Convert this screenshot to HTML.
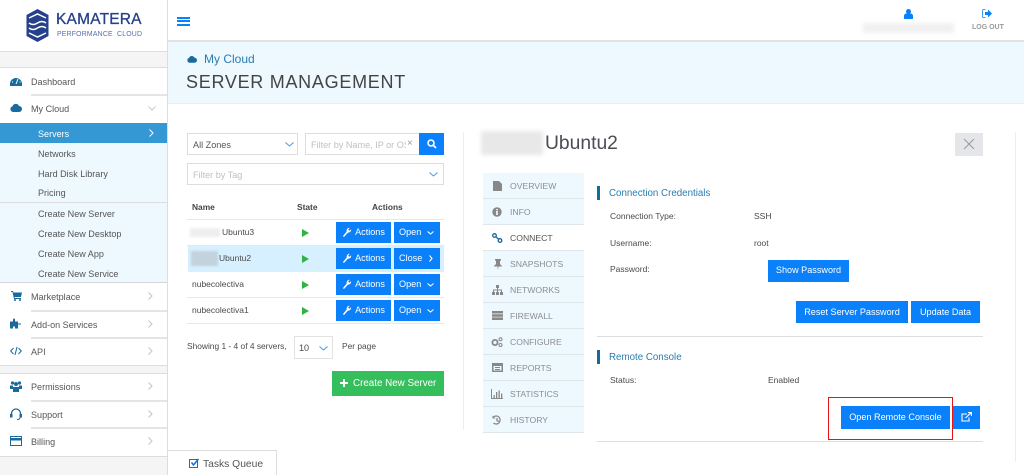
<!DOCTYPE html>
<html><head><meta charset="utf-8"><style>
*{box-sizing:border-box}
html,body{margin:0;padding:0;width:1024px;height:475px;overflow:hidden;background:#fff;font-family:"Liberation Sans",sans-serif;color:#4a4a4a}
.a{position:absolute}
.t{position:absolute;line-height:20px;height:20px;white-space:nowrap;font-size:9px}
.m{font-size:9.050px;color:#555;margin-top:1px}
.l{position:absolute;height:1px;background:#ddd}
.s{height:2px;background:#e4e4e4}
.b{position:absolute;background:#0a80fb;color:#fff;font-size:9.100px;text-align:center;white-space:nowrap}
.g{position:absolute;left:483px;width:101px;height:26px;background:#eef8ff;border-bottom:1px solid #dfe6ea}
.g span{position:absolute;left:27px;top:0;line-height:26px;font-size:8.650px;color:#8a8f93}
svg{position:absolute;overflow:visible}
.blur{position:absolute;filter:blur(2px)}
</style></head><body>

<!-- sidebar -->
<div class="a" style="left:167px;top:0;width:1px;height:475px;background:#ddd"></div>
<div class="a" style="left:0;top:51px;width:167px;height:17px;background:#f5f5f5;border-top:1px solid #ddd;border-bottom:1px solid #ddd"></div>

<!-- logo -->
<svg style="left:26px;top:9px" width="23" height="33" viewBox="0 0 23 33">
<path d="M11.500 0L22.500 6V27L11.500 33L.5 27V6Z" fill="#26408b"/>
<path d="M3 9L11.500 5L20 9M3 14q4 3 8.500 0t8.500 0M3 19q4 3 8.500 0t8.500 0M3 24L11.500 28L20 24" fill="none" stroke="#fff" stroke-width="1.500"/>
</svg>
<div class="t" style="left:56px;top:10px;font-size:15.500px;color:#26408b;letter-spacing:.2px;-webkit-text-stroke:.3px #26408b">KAMATERA</div>
<div class="t" style="left:57px;top:25px;font-size:6.900px;color:#5470a8;letter-spacing:.2px">PERFORMANCE&nbsp; CLOUD</div>

<div class="t m" style="left:31px;top:71px">Dashboard</div>
<div class="l s" style="left:31px;top:94px;width:136px"></div>
<div class="t m" style="left:31px;top:98px">My Cloud</div>

<div class="a" style="left:0;top:123px;width:167px;height:20px;background:#3498d4"></div>
<div class="a" style="left:0;top:143px;width:167px;height:139px;background:#eef8ff"></div>
<div class="t m" style="left:38px;top:123px;color:#fff">Servers</div>
<div class="t m" style="left:38px;top:143px">Networks</div>
<div class="t m" style="left:38px;top:163px">Hard Disk Library</div>
<div class="t m" style="left:38px;top:182px">Pricing</div>
<div class="l" style="left:0;top:202px;width:167px"></div>
<div class="t m" style="left:38px;top:203px">Create New Server</div>
<div class="t m" style="left:38px;top:223px">Create New Desktop</div>
<div class="t m" style="left:38px;top:243px">Create New App</div>
<div class="t m" style="left:38px;top:263px">Create New Service</div>
<div class="l" style="left:0;top:282px;width:167px;background:#d5d5d5"></div>

<div class="t m" style="left:31px;top:286px">Marketplace</div>
<div class="l s" style="left:31px;top:310px;width:136px"></div>
<div class="t m" style="left:31px;top:314px">Add-on Services</div>
<div class="l s" style="left:31px;top:337px;width:136px"></div>
<div class="t m" style="left:31px;top:341px">API</div>
<div class="a" style="left:0;top:365px;width:167px;height:9px;background:#f5f5f5;border-top:1px solid #ddd;border-bottom:1px solid #ddd"></div>
<div class="t m" style="left:31px;top:376px">Permissions</div>
<div class="l s" style="left:31px;top:400px;width:136px"></div>
<div class="t m" style="left:31px;top:404px">Support</div>
<div class="l s" style="left:31px;top:427px;width:136px"></div>
<div class="t m" style="left:31px;top:431px">Billing</div>
<div class="a" style="left:0;top:456px;width:167px;height:19px;background:#f5f5f5;border-top:1px solid #ddd"></div>

<!-- sidebar icons -->
<svg style="left:10px;top:76px" width="12" height="10" viewBox="0 0 12 10"><path d="M0 8a6 6 0 0 1 12 0v2H0Z" fill="#1a6a9c"/><path d="M6 8L8 3M2 6h1M9.500 6h1" stroke="#fff" stroke-width="1"/></svg>
<svg style="left:10px;top:103px" width="12" height="9" viewBox="0 0 12 9"><path d="M3 9a3 3 0 0 1-.5-5.800A3.500 3.500 0 0 1 9 3a3 3 0 0 1 0 6Z" fill="#1a6a9c"/></svg>
<svg style="left:11px;top:291px" width="11" height="10" viewBox="0 0 11 10"><path d="M0 0h2l.5 1.500H11L10 6H3.500L3.800 7H10V8H3L1.500 1H0Z" fill="#1a6a9c"/><circle cx="4" cy="9" r="1" fill="#1a6a9c"/><circle cx="9" cy="9" r="1" fill="#1a6a9c"/></svg>
<svg style="left:10px;top:318px" width="11" height="11" viewBox="0 0 11 10"><path d="M0 3H3V1a1 1 0 0 1 2 0V3H8V5H11V6H8V10H5V8H3V10H0Z" fill="#1a6a9c"/></svg>
<svg style="left:10px;top:347px" width="12" height="8" viewBox="0 0 12 8"><path d="M3.500 1L.7 4L3.500 7M8.500 1L11.300 4L8.500 7M7 0L5 8" fill="none" stroke="#1a6a9c" stroke-width="1"/></svg>
<svg style="left:10px;top:381px" width="12" height="11" viewBox="0 0 12 11"><circle cx="2.500" cy="2" r="1.600" fill="#1a6a9c"/><circle cx="9.500" cy="2" r="1.600" fill="#1a6a9c"/><circle cx="6" cy="3" r="2" fill="#1a6a9c"/><path d="M0 4.500H3L3 8H0ZM9 4.500H12V8H9ZM3 6H9V11H3Z" fill="#1a6a9c"/></svg>
<svg style="left:10px;top:409px" width="12" height="11" viewBox="0 0 12 11"><path d="M1.500 6V4.500a4.500 4.500 0 0 1 9 0V6" fill="none" stroke="#1a6a9c" stroke-width="1.300"/><rect x="0" y="5" width="2.500" height="3.500" fill="#1a6a9c"/><rect x="9.500" y="5" width="2.500" height="3.500" fill="#1a6a9c"/><path d="M10 8.500q0 2-3 2" fill="none" stroke="#1a6a9c"/></svg>
<svg style="left:10px;top:436px" width="12" height="10" viewBox="0 0 12 10"><rect x=".5" y=".5" width="11" height="9" fill="none" stroke="#1a6a9c"/><rect x="0" y="2" width="12" height="2.500" fill="#1a6a9c"/></svg>

<!-- sidebar chevrons -->
<svg style="left:148px;top:106px" width="8" height="5"><path d="M.5.500L4 4L7.500.500" fill="none" stroke="#ccc"/></svg>
<svg style="left:149px;top:129px" width="5" height="8"><path d="M.5.500L4 4L.5 7.500" fill="none" stroke="#fff"/></svg>
<svg style="left:148px;top:292px" width="5" height="8"><path d="M.5.500L4 4L.5 7.500" fill="none" stroke="#c4c4c4"/></svg>
<svg style="left:148px;top:320px" width="5" height="8"><path d="M.5.500L4 4L.5 7.500" fill="none" stroke="#c4c4c4"/></svg>
<svg style="left:148px;top:347px" width="5" height="8"><path d="M.5.500L4 4L.5 7.500" fill="none" stroke="#c4c4c4"/></svg>
<svg style="left:148px;top:382px" width="5" height="8"><path d="M.5.500L4 4L.5 7.500" fill="none" stroke="#c4c4c4"/></svg>
<svg style="left:148px;top:410px" width="5" height="8"><path d="M.5.500L4 4L.5 7.500" fill="none" stroke="#c4c4c4"/></svg>
<svg style="left:148px;top:437px" width="5" height="8"><path d="M.5.500L4 4L.5 7.500" fill="none" stroke="#c4c4c4"/></svg>

<!-- top bar -->
<div class="a" style="left:177px;top:17px;width:13px;height:2px;background:#0a80fb"></div>
<div class="a" style="left:177px;top:20px;width:13px;height:2px;background:#0a80fb"></div>
<div class="a" style="left:177px;top:24px;width:13px;height:2px;background:#0a80fb"></div>
<svg style="left:904px;top:9px" width="9" height="10" viewBox="0 0 9 10"><circle cx="4.500" cy="2.500" r="2.500" fill="#0a80fb"/><path d="M0 10V7q0-2 2-2.500h5q2 .5 2 2.500v3Z" fill="#0a80fb"/></svg>
<div class="blur" style="left:863px;top:23px;width:91px;height:10px;background:#f0f0f0"></div>
<svg style="left:982px;top:9px" width="10" height="9" viewBox="0 0 10 9"><path d="M3.500.500H1.500A1 1 0 0 0 .5 1.500V7.500A1 1 0 0 0 1.500 8.500H3.500" fill="none" stroke="#3d9af5"/><path d="M3 3H6V.5L10 4.500L6 8.500V6H3Z" fill="#0a80fb"/></svg>
<div class="t" style="left:972px;top:18px;font-size:7px;font-weight:700;color:#999">LOG OUT</div>
<div class="a" style="left:168px;top:40px;width:856px;height:2px;background:#e2e2e2"></div>

<!-- band -->
<div class="a" style="left:168px;top:42px;width:856px;height:62px;background:#eef8ff;border-bottom:1px solid #e6eff5"></div>
<svg style="left:187px;top:55px" width="10" height="8" viewBox="0 0 12 9"><path d="M3 9a3 3 0 0 1-.5-5.800A3.500 3.500 0 0 1 9 3a3 3 0 0 1 0 6Z" fill="#1a6a9c"/></svg>
<div class="t" style="left:204px;top:49px;font-size:12px;color:#2a7cb0">My Cloud</div>
<div class="t" style="left:186px;top:72px;font-size:18px;color:#444;letter-spacing:.72px">SERVER MANAGEMENT</div>

<!-- filters -->
<div class="a" style="left:187px;top:133px;width:111px;height:22px;border:1px solid #ddd"></div>
<div class="t" style="left:193px;top:135px;font-size:9.100px;color:#555">All Zones</div>
<svg style="left:285px;top:142px" width="9" height="5"><path d="M.5.500L4.500 4L8.500.500" fill="none" stroke="#3d9af5"/></svg>
<div class="a" style="left:305px;top:133px;width:114px;height:22px;border:1px solid #ddd;border-right:0"></div>
<div class="t" style="left:311px;top:135px;font-size:9.100px;color:#c0c0c0;width:99px;overflow:hidden">Filter by Name, IP or OS</div>
<div class="t" style="left:406px;top:134px;font-size:10px;color:#999;background:#fff;padding:0 1px;height:18px">×</div>
<div class="a" style="left:419px;top:133px;width:25px;height:22px;background:#0a80fb"></div>
<svg style="left:427px;top:139px" width="10" height="10" viewBox="0 0 10 10"><circle cx="4" cy="4" r="3" fill="none" stroke="#fff" stroke-width="1.600"/><path d="M6.300 6.300L9 9" stroke="#fff" stroke-width="1.800"/></svg>
<div class="a" style="left:187px;top:163px;width:257px;height:22px;border:1px solid #ddd"></div>
<div class="t" style="left:193px;top:165px;font-size:9.100px;color:#c0c0c0">Filter by Tag</div>
<svg style="left:429px;top:172px" width="9" height="5"><path d="M.5.500L4.500 4L8.500.500" fill="none" stroke="#3d9af5"/></svg>

<!-- table -->
<div class="t" style="left:192px;top:197px;font-size:8.400px;font-weight:700;color:#444">Name</div>
<div class="t" style="left:297px;top:197px;font-size:8.400px;font-weight:700;color:#444">State</div>
<div class="t" style="left:372px;top:197px;font-size:8.400px;font-weight:700;color:#444">Actions</div>
<div class="l" style="left:187px;top:219px;width:257px;background:#e8e8e8"></div>
<div class="a" style="left:188px;top:246px;width:256px;height:26px;background:#d6f0ff"></div>
<div class="l" style="left:187px;top:245px;width:257px;background:#e8e8e8"></div>
<div class="l" style="left:187px;top:297px;width:257px;background:#e8e8e8"></div>
<div class="l" style="left:187px;top:323px;width:257px;background:#e8e8e8"></div>

<div class="blur" style="left:190px;top:228px;width:30px;height:9px;background:#eee;filter:blur(1px)"></div>
<div class="t" style="left:222px;top:222px;font-size:8.500px">Ubuntu3</div>
<div class="blur" style="left:191px;top:251px;width:27px;height:15px;background:#c3d2dc;filter:blur(1px)"></div>
<div class="t" style="left:219px;top:248px;font-size:8.500px">Ubuntu2</div>
<div class="t" style="left:192px;top:274px;font-size:8.500px">nubecolectiva</div>
<div class="t" style="left:192px;top:300px;font-size:8.500px">nubecolectiva1</div>

<svg style="left:302px;top:229px" width="7" height="8"><path d="M0 0L7 4L0 8Z" fill="#2fb344"/></svg>
<svg style="left:302px;top:255px" width="7" height="8"><path d="M0 0L7 4L0 8Z" fill="#2fb344"/></svg>
<svg style="left:302px;top:281px" width="7" height="8"><path d="M0 0L7 4L0 8Z" fill="#2fb344"/></svg>
<svg style="left:302px;top:307px" width="7" height="8"><path d="M0 0L7 4L0 8Z" fill="#2fb344"/></svg>

<div class="b" style="left:336px;top:222px;width:55px;height:21px;line-height:20px;padding-left:13px">Actions</div>
<div class="b" style="left:336px;top:248px;width:55px;height:21px;line-height:20px;padding-left:13px">Actions</div>
<div class="b" style="left:336px;top:274px;width:55px;height:21px;line-height:20px;padding-left:13px">Actions</div>
<div class="b" style="left:336px;top:300px;width:55px;height:21px;line-height:20px;padding-left:13px">Actions</div>
<svg style="left:342px;top:227px" width="10" height="10" viewBox="0 0 9 9"><path d="M.8 8.200L4.200 4.200Q3.800 1.500 6.200.7L7 .8L5.500 2.300L6.600 3.500L8.200 2Q8.500 4.800 5.200 5.200L1.800 9Z" fill="#fff"/></svg>
<svg style="left:342px;top:253px" width="10" height="10" viewBox="0 0 9 9"><path d="M.8 8.200L4.200 4.200Q3.800 1.500 6.200.7L7 .8L5.500 2.300L6.600 3.500L8.200 2Q8.500 4.800 5.200 5.200L1.800 9Z" fill="#fff"/></svg>
<svg style="left:342px;top:279px" width="10" height="10" viewBox="0 0 9 9"><path d="M.8 8.200L4.200 4.200Q3.800 1.500 6.200.7L7 .8L5.500 2.300L6.600 3.500L8.200 2Q8.500 4.800 5.200 5.200L1.800 9Z" fill="#fff"/></svg>
<svg style="left:342px;top:305px" width="10" height="10" viewBox="0 0 9 9"><path d="M.8 8.200L4.200 4.200Q3.800 1.500 6.200.7L7 .8L5.500 2.300L6.600 3.500L8.200 2Q8.500 4.800 5.200 5.200L1.800 9Z" fill="#fff"/></svg>

<div class="b" style="left:394px;top:222px;width:46px;height:21px;line-height:20px;text-align:left;padding-left:5px">Open</div>
<div class="b" style="left:394px;top:248px;width:46px;height:21px;line-height:20px;text-align:left;padding-left:5px">Close</div>
<div class="b" style="left:394px;top:274px;width:46px;height:21px;line-height:20px;text-align:left;padding-left:5px">Open</div>
<div class="b" style="left:394px;top:300px;width:46px;height:21px;line-height:20px;text-align:left;padding-left:5px">Open</div>
<svg style="left:427px;top:231px" width="7" height="4"><path d="M.5.500L3.500 3L6.500.500" fill="none" stroke="#fff" stroke-width="1.100"/></svg>
<svg style="left:429px;top:255px" width="4" height="7"><path d="M.5.500L3 3.500L.5 6.500" fill="none" stroke="#fff" stroke-width="1.100"/></svg>
<svg style="left:427px;top:283px" width="7" height="4"><path d="M.5.500L3.500 3L6.500.500" fill="none" stroke="#fff" stroke-width="1.100"/></svg>
<svg style="left:427px;top:309px" width="7" height="4"><path d="M.5.500L3.500 3L6.500.500" fill="none" stroke="#fff" stroke-width="1.100"/></svg>

<div class="t" style="left:187px;top:336px;font-size:8.400px">Showing 1 - 4 of 4 servers,</div>
<div class="a" style="left:294px;top:336px;width:39px;height:23px;border:1px solid #e2e2e2"></div>
<div class="t" style="left:299px;top:338px;font-size:9.100px">10</div>
<svg style="left:319px;top:346px" width="9" height="5"><path d="M.5.500L4.500 4L8.500.500" fill="none" stroke="#3d9af5"/></svg>
<div class="t" style="left:342px;top:336px;font-size:8.400px">Per page</div>

<div class="a" style="left:332px;top:371px;width:112px;height:25px;background:#35bf5c"></div>
<svg style="left:340px;top:379px" width="8" height="8"><path d="M3 0h2v3h3v2H5v3H3V5H0V3h3Z" fill="#fff"/></svg>
<div class="t" style="left:353px;top:374px;font-size:9.800px;color:#fff">Create New Server</div>

<div class="a" style="left:463px;top:132px;width:1px;height:298px;background:#eee"></div>
<div class="a" style="left:1015px;top:132px;width:1px;height:330px;background:#eee"></div>

<!-- detail -->
<div class="blur" style="left:481px;top:131px;width:62px;height:24px;background:#e8e8e8"></div>
<div class="t" style="left:545px;top:134px;font-size:19.300px;color:#4c4c55">Ubuntu2</div>
<div class="a" style="left:955px;top:133px;width:28px;height:23px;background:#e5e6e9"></div>
<svg style="left:964px;top:139px" width="10" height="10"><path d="M0 0L10 10M10 0L0 10" stroke="#999" stroke-width="1"/></svg>

<!-- tabs -->
<div class="g" style="top:173px"><span>OVERVIEW</span></div>
<div class="g" style="top:199px"><span>INFO</span></div>
<div class="g" style="top:225px;background:#fff"><span style="color:#555">CONNECT</span></div>
<div class="g" style="top:251px"><span>SNAPSHOTS</span></div>
<div class="g" style="top:277px"><span>NETWORKS</span></div>
<div class="g" style="top:303px"><span>FIREWALL</span></div>
<div class="g" style="top:329px"><span>CONFIGURE</span></div>
<div class="g" style="top:355px"><span>REPORTS</span></div>
<div class="g" style="top:381px"><span>STATISTICS</span></div>
<div class="g" style="top:407px"><span>HISTORY</span></div>

<svg style="left:493px;top:181px" width="9" height="10"><path d="M0 0H6L9 3V10H0Z" fill="#888"/></svg>
<svg style="left:492px;top:207px" width="10" height="10"><circle cx="5" cy="5" r="4.700" fill="#888"/><rect x="4.200" y="4" width="1.600" height="4" fill="#fff"/><rect x="4.200" y="2" width="1.600" height="1.300" fill="#fff"/></svg>
<svg style="left:492px;top:233px" width="11" height="10" viewBox="0 0 11 10" fill="none" stroke="#1a6a9c" stroke-width="1.300"><circle cx="2.500" cy="2.500" r="1.800"/><circle cx="8" cy="7.500" r="1.800"/><path d="M3.500 3.500L7 6.500"/></svg>
<svg style="left:494px;top:259px" width="8" height="11"><path d="M1 0H7V1.200L6 2V5L8 7V7.500H4.500L4 11L3.500 7.500H0V7L2 5V2L1 1.200Z" fill="#888"/></svg>
<svg style="left:492px;top:285px" width="11" height="10"><path d="M4 0H7V3H6V4.500H10V7H11V10H8V7H9V5.500H6V7H7V10H4V7H5V5.500H2V7H3V10H0V7H1V4.500H5V3H4Z" fill="#888"/></svg>
<svg style="left:492px;top:311px" width="11" height="9"><path d="M0 0H11V2.500H0ZM0 3.200H11V5.700H0ZM0 6.400H11V9H0Z" fill="#888"/></svg>
<svg style="left:491px;top:337px" width="12" height="10" fill="none" stroke="#888"><circle cx="4" cy="5.500" r="2.600" stroke-width="1.800"/><circle cx="9.500" cy="2.200" r="1.500"/><circle cx="9.500" cy="8" r="1.500"/></svg>
<svg style="left:492px;top:363px" width="11" height="9"><path d="M0 0H11V9H0ZM1.500 3V7.500H9.500V3Z" fill="#888"/><rect x="3" y="4" width="5" height="1" fill="#888"/><rect x="3" y="6" width="5" height="1" fill="#888"/></svg>
<svg style="left:491px;top:389px" width="12" height="10"><path d="M.5 0V9.500H12" fill="none" stroke="#888"/><path d="M2.500 6h1.300v3H2.500ZM5 3h1.300v6H5ZM7.500 1.500h1.300V9H7.500ZM10 4.500h1.300V9H10Z" fill="#888"/></svg>
<svg style="left:492px;top:415px" width="10" height="10" viewBox="0 0 10 10" fill="none" stroke="#888" stroke-width="1.300"><path d="M1.500 2A4 4 0 1 1 1.500 8M5 3V5.500L6.800 6.500"/><path d="M.5 .5L.5 3.500H3.500" fill="#888" stroke="none"/></svg>

<!-- credentials -->
<div class="a" style="left:597px;top:186px;width:3px;height:14px;background:#136a9c"></div>
<div class="t" style="left:609px;top:184px;font-size:9.750px;color:#2a7cb0">Connection Credentials</div>
<div class="t" style="left:610px;top:206px;font-size:8.500px">Connection Type:</div>
<div class="t" style="left:610px;top:233px;font-size:8.500px">Username:</div>
<div class="t" style="left:610px;top:259px;font-size:8.500px">Password:</div>
<div class="t" style="left:754px;top:206px;font-size:8.500px">SSH</div>
<div class="t" style="left:754px;top:233px;font-size:8.500px">root</div>
<div class="b" style="left:768px;top:260px;width:81px;height:22px;line-height:21px">Show Password</div>
<div class="b" style="left:796px;top:301px;width:112px;height:22px;line-height:22px">Reset Server Password</div>
<div class="b" style="left:911px;top:301px;width:69px;height:22px;line-height:22px">Update Data</div>
<div class="l" style="left:597px;top:336px;width:386px;background:#ddd"></div>

<div class="a" style="left:597px;top:350px;width:3px;height:14px;background:#136a9c"></div>
<div class="t" style="left:609px;top:348px;font-size:9.750px;color:#2a7cb0">Remote Console</div>
<div class="t" style="left:610px;top:370px;font-size:8.500px">Status:</div>
<div class="t" style="left:768px;top:370px;font-size:8.500px">Enabled</div>
<div class="b" style="left:841px;top:406px;width:109px;height:23px;line-height:23px">Open Remote Console</div>
<div class="b" style="left:953px;top:406px;width:27px;height:23px"></div>
<svg style="left:961px;top:412px" width="11" height="10" viewBox="0 0 11 10" fill="none" stroke="#fff" stroke-width="1.100"><path d="M6 2H1V9H8V5.500M4.500 6L10 .8M7 .6H10.400V4"/></svg>
<div class="a" style="left:828px;top:397px;width:125px;height:43px;border:1px solid #ee1111"></div>
<div class="l" style="left:597px;top:441px;width:386px;background:#ddd"></div>

<!-- tasks queue -->
<div class="a" style="left:168px;top:450px;width:109px;height:25px;background:#fff;border-top:1px solid #ddd;border-right:1px solid #ddd"></div>
<svg style="left:189px;top:458px" width="10" height="10"><rect x=".5" y="1.500" width="8" height="8" fill="none" stroke="#0a70e0"/><path d="M2.500 4.500L4.500 7L9.500 1" fill="none" stroke="#0a70e0" stroke-width="1.500"/></svg>
<div class="t" style="left:203px;top:455px;font-size:10.300px;color:#555">Tasks Queue</div>

</body></html>
